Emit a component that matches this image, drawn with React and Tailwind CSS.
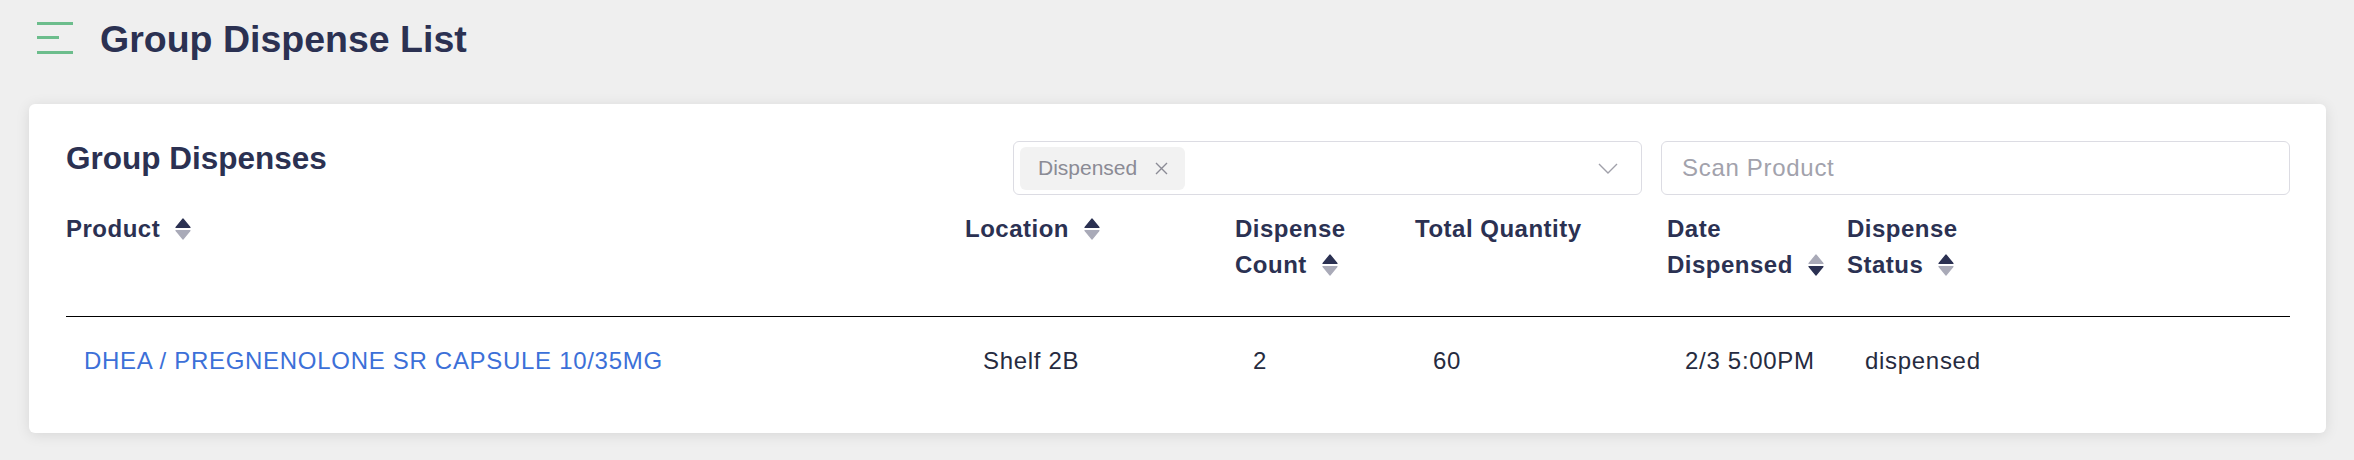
import React from 'react';

const SortIcon = ({ dir = 'up' }) => {
  const dark = '#2b3152';
  const light = '#a9aab8';
  const up = dir === 'up' ? dark : light;
  const down = dir === 'down' ? dark : light;
  return (
    <svg width="16" height="22" viewBox="0 0 16 22" className="ml-[15px] shrink-0">
      <path d="M8 1 L15 9.5 H1 Z" fill={up} stroke={up} strokeWidth="1.2" strokeLinejoin="round" />
      <path d="M1 12.5 H15 L8 21 Z" fill={down} stroke={down} strokeWidth="1.2" strokeLinejoin="round" />
    </svg>
  );
};

const HeaderCell = ({ lines, sort }) => (
  <div className="text-[24px] leading-[36px] font-bold tracking-[0.5px] text-[#2b3152] pb-[33px]">
    {lines.map((line, i) => (
      <div key={i} className="flex items-center">
        <span>{line}</span>
        {i === lines.length - 1 && sort && <SortIcon dir={sort} />}
      </div>
    ))}
  </div>
);

const columns = [
  { lines: ['Product'], sort: 'up' },
  { lines: ['Location'], sort: 'up' },
  { lines: ['Dispense', 'Count'], sort: 'up' },
  { lines: ['Total Quantity'] },
  { lines: ['Date', 'Dispensed'], sort: 'down' },
  { lines: ['Dispense', 'Status'], sort: 'up' },
];

const row = {
  product: 'DHEA / PREGNENOLONE SR CAPSULE 10/35MG',
  location: 'Shelf 2B',
  count: '2',
  quantity: '60',
  date: '2/3 5:00PM',
  status: 'dispensed',
};

export default function App() {
  return (
    <div className="min-h-screen bg-[#efefef] font-['Liberation_Sans',Arial,sans-serif]">
      <div className="flex items-start pt-[17px] pl-[37px]">
        <svg width="36" height="32" viewBox="0 0 36 32" className="mt-[5px]">
          <rect x="0" y="0" width="36" height="3" fill="#6cbd8c" />
          <rect x="0" y="14" width="22" height="3" fill="#6cbd8c" />
          <rect x="0" y="29" width="36" height="3" fill="#6cbd8c" />
        </svg>
        <h1 className="ml-[27px] text-[37.5px] leading-[45px] font-bold text-[#2b3152]">
          Group Dispense List
        </h1>
      </div>

      <div className="mt-[42px] ml-[29px] mr-[28px] bg-white rounded-[6px] shadow-[0_2px_14px_rgba(0,0,0,0.10)] pt-[37px] pb-[35px] pl-[37px] pr-[36px]">
        <div className="flex items-start justify-between">
          <h2 className="-mt-[2px] text-[31.5px] leading-[38px] font-bold text-[#2b3152]">
            Group Dispenses
          </h2>
          <div className="flex gap-[19px]">
            <div className="w-[629px] h-[54px] border border-[#dcdce3] rounded-[6px] flex items-center justify-between pl-[6px] pr-[23px]">
              <div className="h-[43px] w-[165px] bg-[#f2f2f2] rounded-[6px] flex items-center pl-[18px]">
                <span className="text-[21px] text-[#8b8b95]">Dispensed</span>
                <svg width="13" height="13" viewBox="0 0 13 13" className="ml-[18px]">
                  <path d="M1 1 L12 12 M12 1 L1 12" stroke="#8b8b95" strokeWidth="1.4" fill="none" />
                </svg>
              </div>
              <svg width="20" height="11" viewBox="0 0 20 11">
                <path d="M1 1 L10 10 L19 1" stroke="#a0a0aa" strokeWidth="1.4" fill="none" />
              </svg>
            </div>
            <input
              placeholder="Scan Product"
              className="w-[629px] h-[54px] border border-[#dcdce3] rounded-[6px] pl-[20px] text-[24px] tracking-[0.7px] text-[#2b3152] placeholder:text-[#a2a2ac] outline-none"
            />
          </div>
        </div>

        <div className="mt-[16px] grid grid-cols-[899px_270px_180px_252px_180px_1fr]">
          {columns.map((c, i) => (
            <HeaderCell key={i} lines={c.lines} sort={c.sort} />
          ))}
          <div className="col-span-6 border-b border-black" />
          {[row.product, row.location, row.count, row.quantity, row.date, row.status].map((v, i) => (
            <div
              key={i}
              className={`pl-[18px] pt-[26px] pb-[19px] text-[24px] leading-[36px] tracking-[0.7px] ${
                i === 0 ? 'text-[#3c70d8]' : 'text-[#262b40]'
              }`}
            >
              {v}
            </div>
          ))}
        </div>
      </div>
    </div>
  );
}
